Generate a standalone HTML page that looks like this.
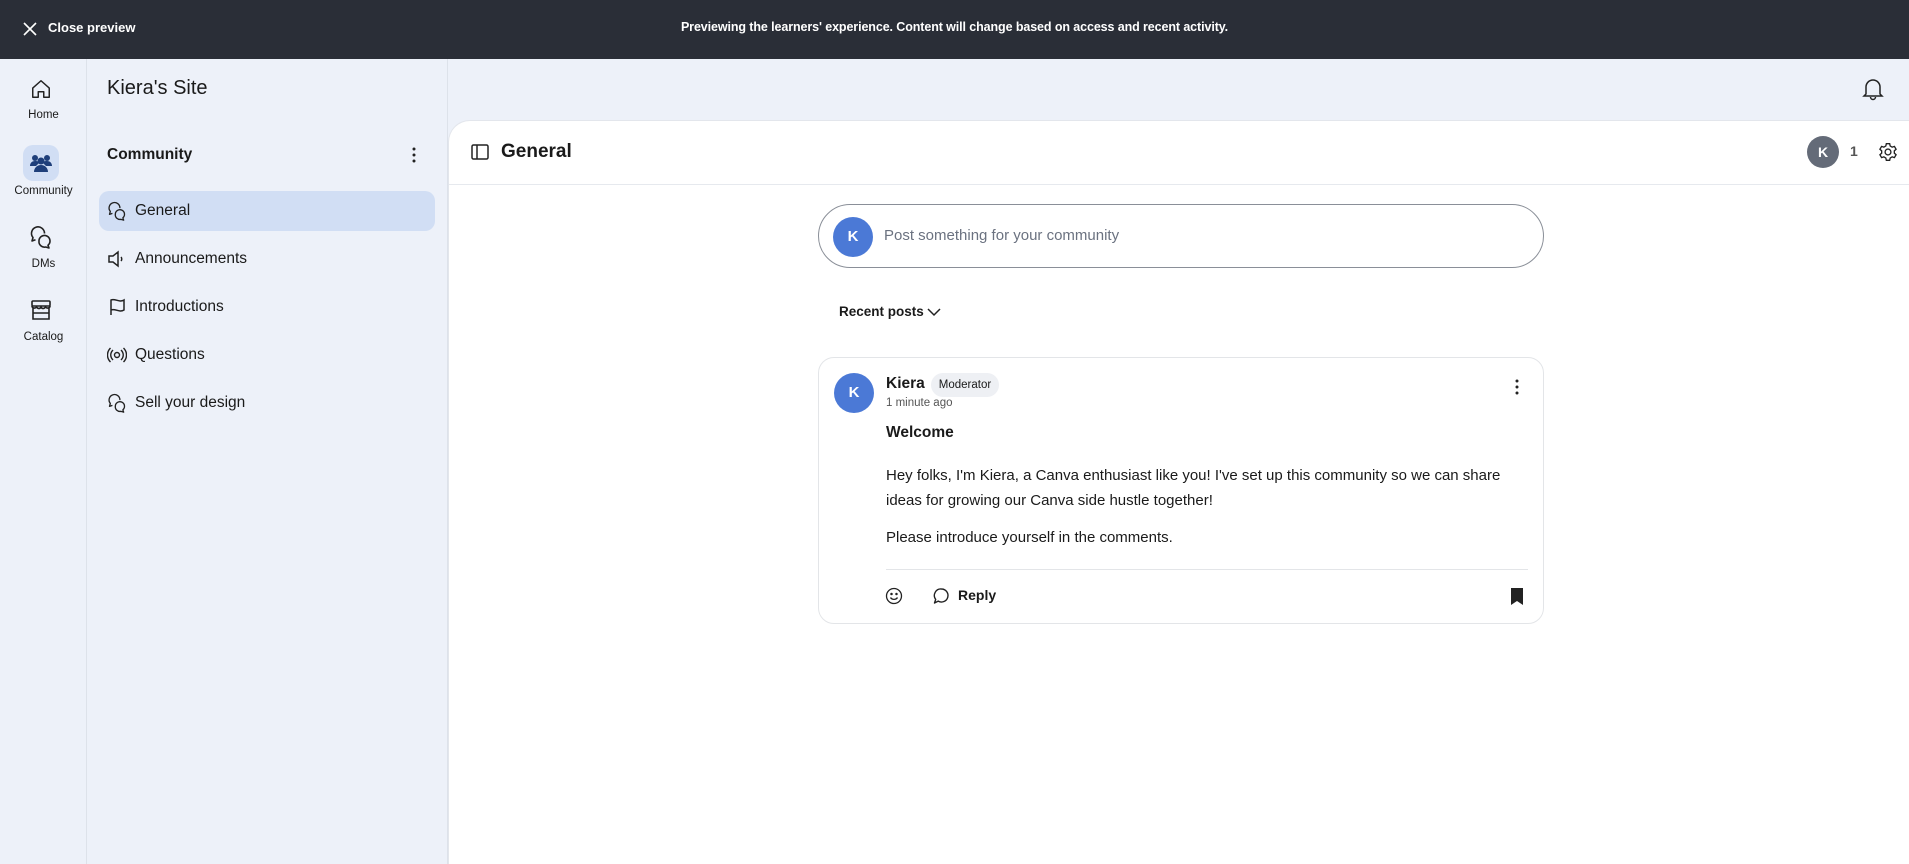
<!DOCTYPE html>
<html><head><meta charset="utf-8"><style>
*{box-sizing:border-box;margin:0;padding:0}
body{width:1909px;height:864px;overflow:hidden;background:#edf1f9;font-family:"Liberation Sans",sans-serif;color:#1a1a1a;position:relative}
.abs{position:absolute}
.top{left:0;top:0;width:1909px;height:59px;background:#2a2e37;color:#fff}
.rail{left:0;top:59px;width:87px;height:805px;border-right:1px solid #dde2ea}
.rl{position:absolute;width:87px;text-align:center;font-size:11.5px;color:#1a1a1a}
.side{left:88px;top:59px;width:360px;height:805px;border-right:1px solid #dde2ea}
.item{position:absolute;left:11px;width:336px;height:40px;border-radius:10px;font-size:15.5px;line-height:40px;padding-left:36px}
.item svg{position:absolute;left:8px;top:10px}
.main{left:448px;top:120px;width:1461px;height:744px;background:#fff;border-top-left-radius:22px;border-left:1px solid #e3e6ec;border-top:1px solid #e3e6ec}
.av{position:absolute;border-radius:50%;background:#4b79d6;color:#fff;font-weight:bold;text-align:center}
</style></head><body>
<div class="abs top">
 <svg class="abs" style="left:22px;top:21px" width="16" height="16" viewBox="0 0 16 16"><path d="M2 2L14 14M14 2L2 14" stroke="#fff" stroke-width="1.6"/></svg>
 <div class="abs" style="left:48px;top:20px;font-size:13px;font-weight:bold">Close preview</div>
 <div class="abs" style="left:0;width:1909px;top:20px;text-align:center;font-size:12.5px;font-weight:bold;letter-spacing:-0.1px">Previewing the learners' experience. Content will change based on access and recent activity.</div>
</div>
<div class="abs rail">
 <svg class="abs" style="left:30px;top:19px" width="22" height="22" viewBox="0 0 24 24" fill="none" stroke="#222" stroke-width="1.6" stroke-linejoin="round"><path d="M3 11L12 3l9 8v10h-6v-6h-6v6H3z"/></svg>
 <div class="rl" style="top:50px">Home</div>
 <div class="abs" style="left:23px;top:86px;width:36px;height:36px;border-radius:10px;background:#d1def4"></div>
 <svg class="abs" style="left:29px;top:93px" width="24" height="22" viewBox="0 0 24 22" fill="#1f3f7a"><circle cx="6" cy="6" r="3"/><circle cx="18" cy="6" r="3"/><circle cx="12" cy="9" r="3.5"/><path d="M1 14c0-3 2-5 5-5s4 1 4 2l-3 3zM23 14c0-3-2-5-5-5s-4 1-4 2l3 3zM5 20c0-4 3-7 7-7s7 3 7 7z"/></svg>
 <div class="rl" style="top:126px">Community</div>
 <svg class="abs" style="left:29px;top:166px" width="24" height="24" viewBox="0 0 24 24" fill="none" stroke="#222" stroke-width="1.6" stroke-linejoin="round"><path d="M15.5 8.5A6.5 6.5 0 1 0 4 12.5L3 16l3.5-1.2"/><path d="M10 16a5.5 5.5 0 1 1 9 4.2l1 2.8-3.3-1A5.5 5.5 0 0 1 10 16z"/></svg>
 <div class="rl" style="top:199px">DMs</div>
 <svg class="abs" style="left:30px;top:240px" width="22" height="22" viewBox="0 0 22 22" fill="none" stroke="#222" stroke-width="1.6"><rect x="2" y="2" width="18" height="5" rx="1"/><path d="M2 7c0 2 3 3 4.5 1 1.5 2 3.5 2 4.5 0 1 2 3 2 4.5 0 1.5 2 4.5 1 4.5-1M3 9v11h16V9M3 14h16"/></svg>
 <div class="rl" style="top:272px">Catalog</div>
</div>
<div class="abs side">
 <div class="abs" style="left:19px;top:18px;font-size:20px">Kiera's Site</div>
 <div class="abs" style="left:19px;top:87px;font-size:15.5px;font-weight:bold">Community</div>
 <svg class="abs" style="left:324px;top:88px" width="4" height="16"><circle cx="2" cy="2" r="1.5" fill="#222"/><circle cx="2" cy="8" r="1.5" fill="#222"/><circle cx="2" cy="14" r="1.5" fill="#222"/></svg>
 <div class="item" style="top:132px;background:#d1def4"><svg width="20" height="20" viewBox="0 0 24 24" fill="none" stroke="#222" stroke-width="1.6" stroke-linejoin="round"><path d="M15.5 8.5A6.5 6.5 0 1 0 4 12.5L3 16l3.5-1.2"/><path d="M10 16a5.5 5.5 0 1 1 9 4.2l1 2.8-3.3-1A5.5 5.5 0 0 1 10 16z"/></svg>General</div>
 <div class="item" style="top:180px"><svg width="20" height="20" viewBox="0 0 20 20" fill="none" stroke="#222" stroke-width="1.5"><path d="M2 7h4l5-4v14l-5-4H2z"/><path d="M14 8c1 1 1 3 0 4"/></svg>Announcements</div>
 <div class="item" style="top:228px"><svg width="20" height="20" viewBox="0 0 20 20" fill="none" stroke="#222" stroke-width="1.5"><path d="M4 18V3c4-2 8 3 13 0v10c-5 3-9-2-13 0"/></svg>Introductions</div>
 <div class="item" style="top:276px"><svg width="20" height="20" viewBox="0 0 20 20" fill="none" stroke="#222" stroke-width="1.4"><circle cx="10" cy="10" r="2.5"/><path d="M6 5c-3 3-3 7 0 10M14 5c3 3 3 7 0 10M3.5 3c-4 4-4 10 0 14M16.5 3c4 4 4 10 0 14"/></svg>Questions</div>
 <div class="item" style="top:324px"><svg width="20" height="20" viewBox="0 0 24 24" fill="none" stroke="#222" stroke-width="1.6" stroke-linejoin="round"><path d="M15.5 8.5A6.5 6.5 0 1 0 4 12.5L3 16l3.5-1.2"/><path d="M10 16a5.5 5.5 0 1 1 9 4.2l1 2.8-3.3-1A5.5 5.5 0 0 1 10 16z"/></svg>Sell your design</div>
</div>
<div class="abs main">
 <svg class="abs" style="left:22px;top:23px" width="18" height="16" viewBox="0 0 18 16" fill="none" stroke="#222" stroke-width="1.5"><rect x="1" y="1" width="16" height="14" rx="1.5"/><path d="M6 1v14"/></svg>
 <div class="abs" style="left:52px;top:20px;font-size:19px;font-weight:bold">General</div>
 <div class="abs" style="left:0;top:63px;width:1461px;height:1px;background:#e6e9ee"></div>
 <div class="av" style="left:1358px;top:15px;width:32px;height:32px;line-height:32px;font-size:14px;background:#646b78">K</div>
 <div class="abs" style="left:1401px;top:22px;font-size:14px;font-weight:bold;color:#555">1</div>
 <svg class="abs" style="left:1429px;top:21px" width="20" height="20" viewBox="0 0 24 24" fill="none" stroke="#222" stroke-width="1.6"><circle cx="12" cy="12" r="3.5"/><path d="M10 2h4l.6 2.8 2.4 1.4 2.7-.9 2 3.4-2.1 1.9v2.8l2.1 1.9-2 3.4-2.7-.9-2.4 1.4L14 22h-4l-.6-2.8-2.4-1.4-2.7.9-2-3.4 2.1-1.9v-2.8L2.3 8.7l2-3.4 2.7.9 2.4-1.4z"/></svg>
 <div class="abs" style="left:369px;top:83px;width:726px;height:64px;border:1px solid #8a8f98;border-radius:32px"></div>
 <div class="av" style="left:384px;top:96px;width:40px;height:40px;line-height:40px;font-size:15px">K</div>
 <div class="abs" style="left:435px;top:106px;font-size:15px;color:#6b7280">Post something for your community</div>
 <div class="abs" style="left:390px;top:183px;font-size:13.5px;font-weight:bold">Recent posts</div>
 <svg class="abs" style="left:478px;top:186px" width="14" height="10" viewBox="0 0 14 10" fill="none" stroke="#222" stroke-width="1.5"><path d="M1 2l6 6 6-6"/></svg>
 <div class="abs" style="left:369px;top:236px;width:726px;height:267px;border:1px solid #e3e5e8;border-radius:16px"></div>
 <div class="av" style="left:385px;top:252px;width:40px;height:40px;line-height:40px;font-size:15px">K</div>
 <div class="abs" style="left:437px;top:254px;font-size:15.5px;font-weight:bold">Kiera</div>
 <div class="abs" style="left:482px;top:252px;width:68px;height:24px;border-radius:12px;background:#eef0f4;font-size:11.5px;line-height:24px;text-align:center">Moderator</div>
 <div class="abs" style="left:437px;top:276px;font-size:11.5px;color:#555">1 minute ago</div>
 <svg class="abs" style="left:1066px;top:258px" width="4" height="16"><circle cx="2" cy="2" r="1.5" fill="#222"/><circle cx="2" cy="8" r="1.5" fill="#222"/><circle cx="2" cy="14" r="1.5" fill="#222"/></svg>
 <div class="abs" style="left:437px;top:303px;font-size:15.5px;font-weight:bold">Welcome</div>
 <div class="abs" style="left:437px;top:342px;font-size:15px;line-height:25px;width:620px">Hey folks, I'm Kiera, a Canva enthusiast like you! I've set up this community so we can share ideas for growing our Canva side hustle together!</div>
 <div class="abs" style="left:437px;top:408px;font-size:15px">Please introduce yourself in the comments.</div>
 <div class="abs" style="left:437px;top:448px;width:642px;height:1px;background:#e3e5e8"></div>
 <svg class="abs" style="left:436px;top:466px" width="18" height="18" viewBox="0 0 18 18" fill="none" stroke="#222" stroke-width="1.3"><circle cx="9" cy="9" r="7.5"/><circle cx="6.5" cy="7" r=".6" fill="#222"/><circle cx="11.5" cy="7" r=".6" fill="#222"/><path d="M5.5 10.5c1.5 2.5 5.5 2.5 7 0"/></svg>
 <svg class="abs" style="left:483px;top:466px" width="18" height="18" viewBox="0 0 18 18" fill="none" stroke="#222" stroke-width="1.4" stroke-linejoin="round"><path d="M9.5 2a6.5 6.5 0 1 1-3.3 12.1L2.5 16l1.2-3.6A6.5 6.5 0 0 1 9.5 2z"/></svg>
 <div class="abs" style="left:509px;top:466px;font-size:14px;font-weight:bold">Reply</div>
 <svg class="abs" style="left:1062px;top:467px" width="12" height="17" viewBox="0 0 12 17"><path d="M0 0h12v17l-6-4-6 4z" fill="#222"/></svg>
</div>
<svg class="abs" style="left:1862px;top:77px" width="22" height="24" viewBox="0 0 22 24" fill="none" stroke="#222" stroke-width="1.5"><path d="M4 17V10a7 7 0 0 1 14 0v7l2 2H2z"/><path d="M8.5 20a2.5 2.5 0 0 0 5 0"/></svg>
</body></html>
